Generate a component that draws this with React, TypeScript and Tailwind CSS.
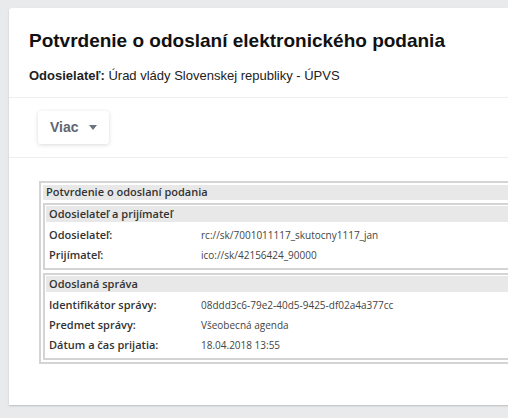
import React from 'react';

const rows1 = [
  { label: 'Odosielateľ:', value: 'rc://sk/7001011117_skutocny1117_jan' },
  { label: 'Prijímateľ:', value: 'ico://sk/42156424_90000' },
];

const rows2 = [
  { label: 'Identifikátor správy:', value: '08ddd3c6-79e2-40d5-9425-df02a4a377cc' },
  { label: 'Predmet správy:', value: 'Všeobecná agenda' },
  { label: 'Dátum a čas prijatia:', value: '18.04.2018 13:55' },
];

const Section: React.FC<{ title: string; rows: { label: string; value: string }[] }> = ({ title, rows }) => (
  <div className="border-2 border-[#d4d4d4] p-[1px]">
    <div className="bg-[#e8e8e8] h-[16px] pl-[3px] flex items-center font-semibold text-[11px] text-[#333]">{title}</div>
    <div className="pt-[3px] pb-[2px]">
      {rows.map((r) => (
        <div key={r.label} className="flex items-center h-[20px] text-[11px] text-[#333]">
          <div className="w-[155px] pl-[3px] font-semibold">{r.label}</div>
          <div className="text-[10px] text-[#444]">{r.value}</div>
        </div>
      ))}
    </div>
  </div>
);

export default function App() {
  return (
    <div className="flex h-[418px] w-[518px] overflow-hidden" style={{ fontFamily: '"Liberation Sans", Arial, sans-serif' }}>
      <div className="w-[508px] h-full bg-[#e9eaec] pt-2 pl-[9px] overflow-hidden shrink-0">
        <div className="w-[540px] h-[397px] bg-white rounded-tl-[3px] shadow-[0_1px_2px_rgba(0,0,0,0.2)]">
          <div className="px-5 pt-[20px] pb-[12px] border-b border-[#eeeeee]">
            <h1 className="text-[19px] font-bold text-[#111] leading-[26px]">Potvrdenie o odoslaní elektronického podania</h1>
            <p className="mt-[13px] text-[13px] text-[#222] leading-[18px]">
              <span className="font-bold">Odosielateľ:</span> Úrad vlády Slovenskej republiky - ÚPVS
            </p>
          </div>
          <div className="px-[29px] py-[13px] border-b border-[#eeeeee]">
            <button className="flex items-center gap-[10px] h-[33px] px-3 rounded-[3px] bg-white shadow-[0_1px_4px_rgba(0,0,0,0.15)] text-[14px] font-bold text-[#5f6671]">
              Viac
              <svg width="8" height="5" viewBox="0 0 8 5"><path d="M0 0h8L4 5z" fill="#6b7280" /></svg>
            </button>
          </div>
          <div className="pl-[30px] pt-[23px]" style={{ fontFamily: '"Open Sans", sans-serif' }}>
            <div className="border-2 border-[#d4d4d4] p-[2px] flex flex-col gap-[3px]">
              <div className="bg-[#e8e8e8] h-[15px] pl-[3px] flex items-center font-semibold text-[11px] text-[#333]">Potvrdenie o odoslaní podania</div>
              <Section title="Odosielateľ a prijímateľ" rows={rows1} />
              <Section title="Odoslaná správa" rows={rows2} />
            </div>
          </div>
        </div>
      </div>
      <div className="w-[10px] h-full bg-white" />
    </div>
  );
}
